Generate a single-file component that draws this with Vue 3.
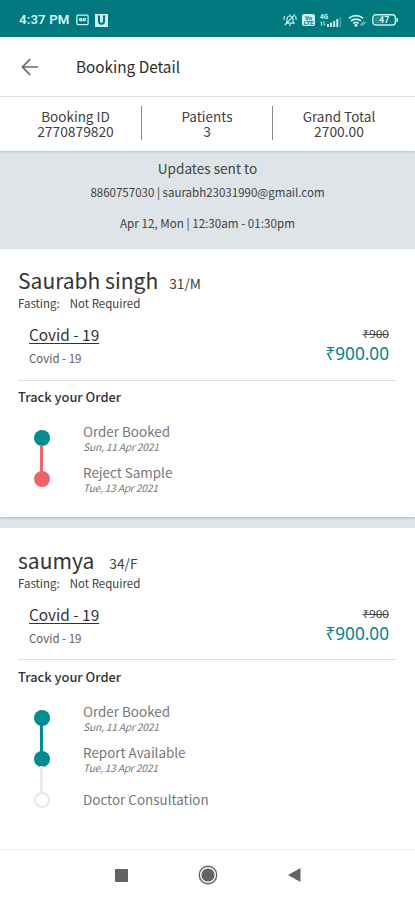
<script setup>
const summary = [
  { label: 'Booking ID', value: '2770879820' },
  { label: 'Patients', value: '3' },
  { label: 'Grand Total', value: '2700.00' },
]
const patients = [
  {
    name: 'Saurabh singh', age: '31/M', kind: 'first',
    steps: [
      { title: 'Order Booked', date: 'Sun, 11 Apr 2021', dot: 'teal', line: 'red' },
      { title: 'Reject Sample', date: 'Tue, 13 Apr 2021', dot: 'red' },
    ],
  },
  {
    name: 'saumya', age: '34/F', kind: 'second',
    steps: [
      { title: 'Order Booked', date: 'Sun, 11 Apr 2021', dot: 'teal', line: 'teal' },
      { title: 'Report Available', date: 'Tue, 13 Apr 2021', dot: 'teal', line: 'pale' },
      { title: 'Doctor Consultation', dot: 'open' },
    ],
  },
]
</script>

<template>
  <div class="screen">
    <header class="status">
      <span class="clock">4:37 PM</span>
      <svg class="s-rec" width="13" height="12" viewBox="0 0 13 12" fill="none" stroke="#c9f1f1" stroke-width="1.3">
        <rect x=".9" y="1.2" width="11.2" height="9.4" rx="1" />
        <circle cx="4.6" cy="5.6" r="1.1" /><circle cx="8.4" cy="5.6" r="1.1" /><path d="M4.6 6.8h3.8" stroke-width=".8" />
      </svg>
      <svg class="s-u" width="13" height="13" viewBox="0 0 13 13">
        <rect width="13" height="13" fill="#c9f1f1" />
        <path d="M4 2v5.2a2.5 2.5 0 0 0 5 0V2" fill="none" stroke="#00787d" stroke-width="2" />
        <path d="M2.5 2h2.5M7.8 2h2.6" stroke="#00787d" />
      </svg>
      <span class="grow"></span>
      <svg width="14" height="14" viewBox="0 0 14 14" fill="none" stroke="#c9f1f1" stroke-width="1.2">
        <path d="M3.2 10.2h7.8L10 8.6V6a3 3 0 0 0-6 0v2.6zM6 12.2h2M7 1.5V3M1.7 3.3a5 5 0 0 0-.6 3.6M12.4 3.3a5 5 0 0 1 .6 3.6M1.6 12.4 12 1.4" />
      </svg>
      <span class="volte"><b>Vo</b><b>LTE</b></span>
      <span class="signal">
        <span class="sig-l"><b>4G</b>
          <svg width="6" height="5" viewBox="0 0 6 5" fill="none" stroke="#c9f1f1" stroke-width=".9"><path d="M1.5 5V.8M.3 2 1.5.8M4 0v4.2M5.2 3 4 4.2" /></svg>
        </span>
        <svg width="15" height="10" viewBox="0 0 15 10" fill="#c9f1f1">
          <rect y="7" width="2" height="3" /><rect x="3.1" y="5.5" width="2" height="4.5" /><rect x="6.2" y="4" width="2" height="6" /><rect x="9.3" y="2" width="2" height="8" /><rect x="12.6" width="1.6" height="10" opacity=".35" />
        </svg>
      </span>
      <svg class="s-wifi" width="18" height="13" viewBox="0 0 18 13" fill="none" stroke="#c9f1f1" stroke-width="1.7">
        <path d="M.8 4.3a11 11 0 0 1 14.4 0M3 7a7.6 7.6 0 0 1 10-.1M5.2 9.5a4.2 4.2 0 0 1 5.4-.2" />
        <circle cx="8" cy="11.2" r=".7" fill="#c9f1f1" />
        <path d="m12.2 11.5 3.6-4M14.3 11.7l3.1-3.5" stroke-width="1" />
      </svg>
      <svg class="s-bat" width="27" height="12" viewBox="0 0 27 12">
        <rect x=".8" y=".8" width="22.6" height="10.2" rx="3" fill="none" stroke="#c9f1f1" stroke-width="1.4" />
        <rect x="2.4" y="2.4" width="8.5" height="7" rx="1" fill="#2f9094" />
        <path d="M25.2 4v4" stroke="#c9f1f1" stroke-width="1.5" />
        <text x="12.2" y="9" text-anchor="middle" class="bat-num">47</text>
      </svg>
    </header>

    <nav class="appbar">
      <svg width="18" height="18" viewBox="0 0 18 18" fill="none" stroke="#6b6b6b" stroke-width="1.7">
        <path d="M17 9H1.5M9.2 1.2 1.4 9l7.8 7.8" />
      </svg>
      <h1>Booking Detail</h1>
    </nav>

    <section class="summary">
      <div v-for="s in summary" :key="s.label" class="cell">
        <span class="cell-label">{{ s.label }}</span>
        <span class="cell-value">{{ s.value }}</span>
      </div>
    </section>

    <section class="updates">
      <p class="up-title">Updates sent to</p>
      <p class="up-line">8860757030 | saurabh23031990@gmail.com</p>
      <p class="up-line when">Apr 12, Mon | 12:30am - 01:30pm</p>
    </section>

    <article v-for="p in patients" :key="p.name" class="card" :class="p.kind">
      <div class="who"><h2>{{ p.name }}</h2><span>{{ p.age }}</span></div>
      <div class="fasting"><span>Fasting:</span><span>Not Required</span></div>
      <div class="test">
        <div>
          <div class="test-name">Covid - 19</div>
          <div class="test-sub">Covid - 19</div>
        </div>
        <div class="prices">
          <div class="old">₹900</div>
          <div class="price">₹900.00</div>
        </div>
      </div>
      <h3>Track your Order</h3>
      <ol class="steps">
        <li v-for="s in p.steps" :key="s.title">
          <div class="rail">
            <span class="dot" :class="s.dot"></span>
            <span v-if="s.line" class="line" :class="s.line"></span>
          </div>
          <div class="step-text" :class="{ single: !s.date }">
            <div class="step-title">{{ s.title }}</div>
            <div v-if="s.date" class="step-date">{{ s.date }}</div>
          </div>
        </li>
      </ol>
    </article>

    <footer class="sysnav">
      <svg width="13" height="13"><rect width="13" height="13" rx=".8" fill="#636363" /></svg>
      <svg width="20" height="20" viewBox="0 0 20 20"><circle cx="10" cy="10" r="8.7" fill="none" stroke="#636363" stroke-width="1.4" /><circle cx="10" cy="10" r="6.6" fill="#636363" /></svg>
      <svg width="13" height="14" viewBox="0 0 13 14"><path d="M12.5 0v14L0 7z" fill="#636363" /></svg>
    </footer>
  </div>
</template>

<style>
body { margin: 0; background: #fff; }
</style>

<style scoped>
.screen { width: 415px; height: 899px; display: flex; flex-direction: column; overflow: hidden; background: #dfe4e8; color: #414141; font-family: "Noto Sans CJK SC", "Noto Sans", sans-serif; }
h1, h2, h3, p, ol { margin: 0; padding: 0; font-weight: 400; }
.status { flex: none; height: 37px; box-sizing: border-box; padding: 3px 16px 0 19px; display: flex; align-items: center; background: #00787d; color: #d4f7f6; }
.clock { width: 57px; font: 600 13.3px/16px Roboto, sans-serif; letter-spacing: .1px; white-space: nowrap; }
.s-u { margin-left: 6px; }
.grow { flex: 1; }
.volte { margin-left: 5px; width: 13px; height: 12px; border-radius: 2px; background: #c9f1f1; color: #00787d; display: flex; flex-direction: column; align-items: center; justify-content: center; font: 6px/5.5px Roboto, sans-serif; }
.signal { margin-left: 5px; display: flex; align-items: flex-end; height: 13px; }
.sig-l { display: flex; flex-direction: column; align-items: flex-start; width: 7px; height: 13px; font: 6.5px/7px Roboto, sans-serif; }
.s-wifi { margin-left: 6px; }
.s-bat { margin-left: 6px; }
.bat-num { font: 700 8.5px Roboto, sans-serif; fill: #d4f7f6; }
.appbar { flex: none; height: 59px; display: flex; align-items: center; padding-left: 21px; background: #fff; border-bottom: 1px solid #e6e6e6; }
.appbar h1 { margin-left: 37px; padding-bottom: 2px; font-size: 15.3px; line-height: 20px; color: #2c2c2c; }
.summary { flex: none; height: 54px; display: grid; grid-template-columns: 142px 131px 1fr; box-sizing: border-box; padding: 9px 0 11px; background: #fff; box-shadow: 0 1px 2px #bfc4c7; position: relative; }
.cell { display: flex; flex-direction: column; align-items: center; justify-content: center; font-size: 13.8px; line-height: 15px; border-right: 1px solid #8b8b8b; padding: 1px 0 0 10px; }
.cell-label { font-size: 13.5px; }
.cell:nth-child(2) { padding-left: 0; }
.cell:last-child { border: 0; padding: 1px 10px 0 0; }
.updates { flex: none; height: 98px; box-sizing: border-box; padding-top: 7px; text-align: center; }
.up-title { font-size: 13.6px; line-height: 20px; }
.up-line { font-size: 11.53px; line-height: 16px; margin-top: 6px; }
.when { margin-top: 15px; font-size: 11.65px; }
.card { flex: none; box-sizing: border-box; padding: 0 18px; background: #fff; }
.first { height: 268px; padding-top: 18px; box-shadow: 0 1px 2px #afb5b9; }
.second { height: 321px; margin-top: 11px; padding-top: 19px; }
.who { display: flex; align-items: baseline; height: 28px; }
.who h2 { font-size: 21.05px; line-height: 27px; color: #333; }
.who span { margin-left: 11px; font-size: 13.7px; line-height: 20px; }
.second .who span { margin-left: 15px; }
.first .who { height: 28px; }
.fasting { display: flex; gap: 10px; font-size: 11.5px; line-height: 16px; }
.test { display: flex; justify-content: space-between; box-sizing: border-box; height: 70px; padding: 13px 7px 0 11px; border-bottom: 1px solid #dedede; margin-right: 1px; }
.second .test { height: 69px; }
.second h3 { margin-top: 7px; }
.test-name { font-size: 15.4px; line-height: 20px; color: #333; text-decoration: underline; text-decoration-thickness: 1px; text-underline-offset: 2px; }
.test-sub { margin-top: 6px; font-size: 11.5px; line-height: 16px; color: #5e5e5e; }
.prices { padding-top: 1px; text-align: right; font-family: "Noto Sans", sans-serif; }
.old { font-size: 11.6px; line-height: 18px; text-decoration: line-through; text-decoration-thickness: 1px; color: #444; }
.price { font-size: 17.2px; line-height: 22px; color: #00858a; }
h3 { margin-top: 6px; font-size: 12.9px; line-height: 20px; font-weight: 500; color: #333; }
.steps { list-style: none; margin-top: 15px; }
.steps li { height: 41px; display: flex; }
.rail { width: 47px; display: flex; flex-direction: column; align-items: center; padding-top: 8px; box-sizing: border-box; }
.dot { flex: none; box-sizing: border-box; width: 16px; height: 16px; border-radius: 50%; }
.line { width: 3px; height: 27px; flex: none; margin: -1px 0; }
.teal { background: #008c91; }
.red { background: #ef6268; }
.pale { background: #ececec; }
.open { border: 2px solid #e5e5e5; background: #fff; }
.step-text { margin-left: 18px; color: #777; }
.step-title { font-size: 13.45px; line-height: 18px; }
.step-date { font-size: 10.3px; line-height: 13px; letter-spacing: -.23px; font-style: italic; }
.single { padding-top: 6px; }
.sysnav { flex: none; height: 50px; box-sizing: border-box; border-top: 1px solid #eee; display: grid; grid-template-columns: 13px 20px 13px; gap: 70px; align-items: center; padding: 1px 0 0 115px; background: #fff; }
</style>
